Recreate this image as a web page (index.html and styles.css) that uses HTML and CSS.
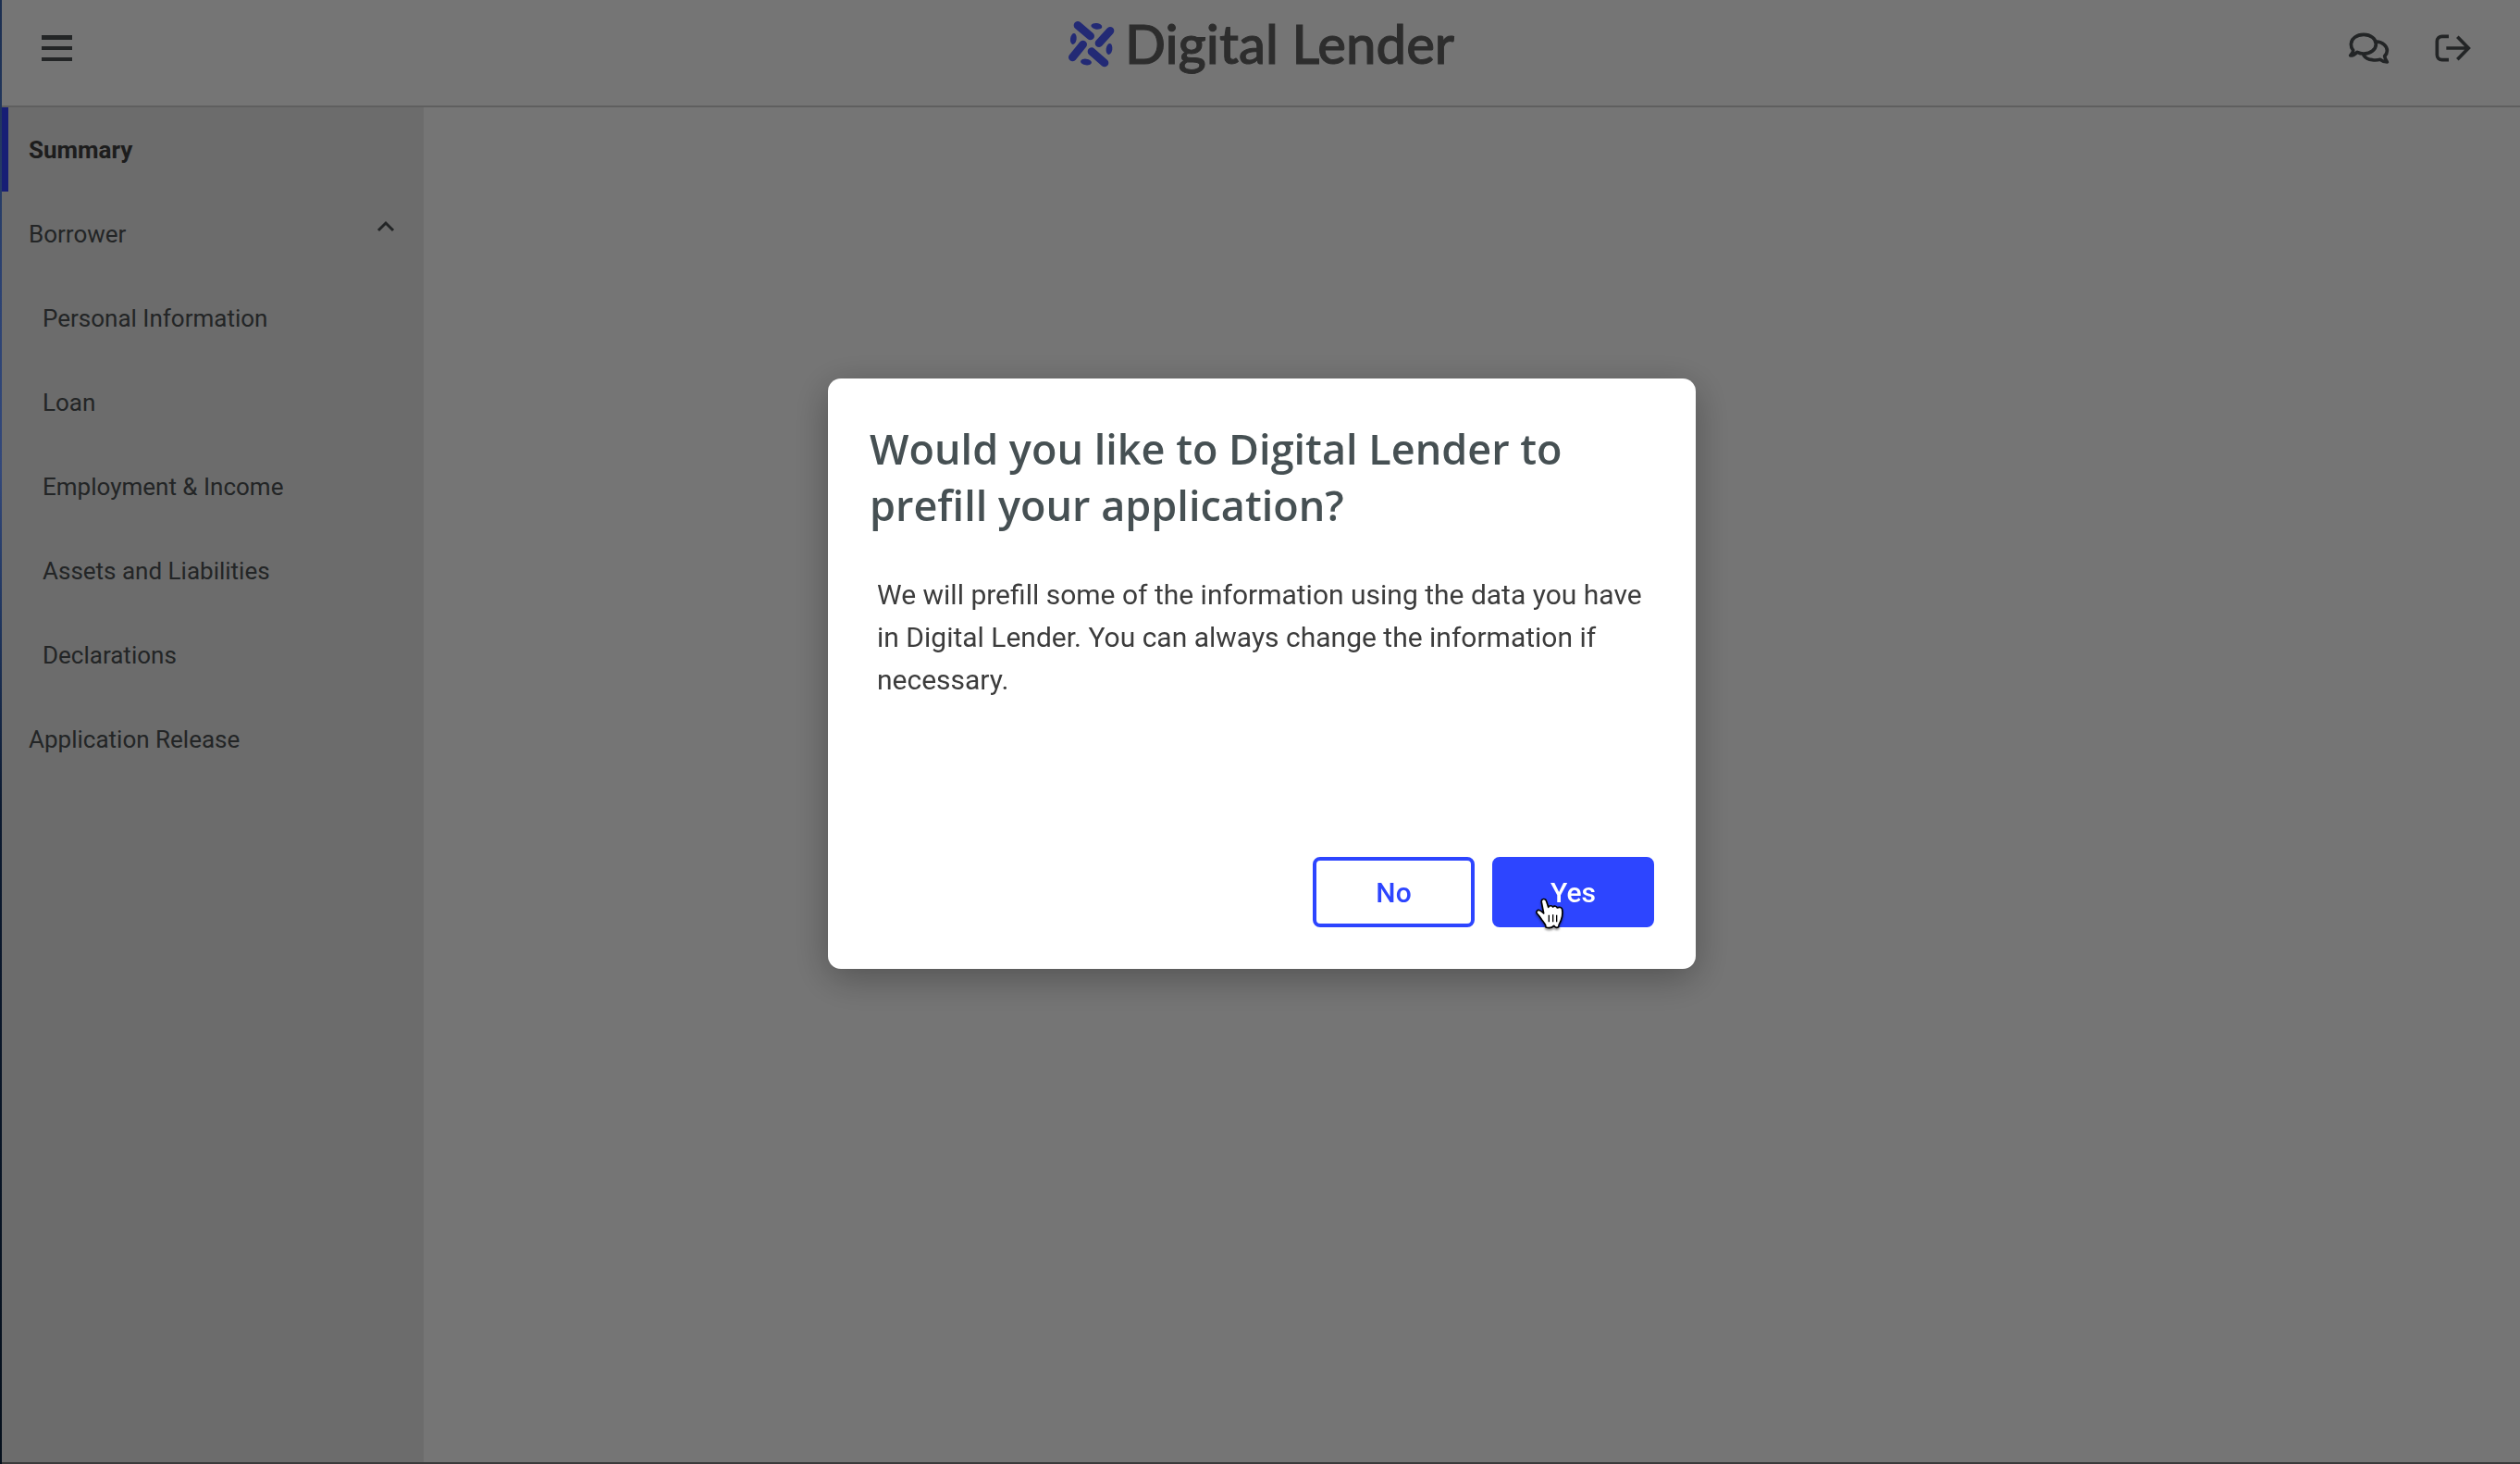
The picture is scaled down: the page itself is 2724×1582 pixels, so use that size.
FILE: index.html
```html
<!DOCTYPE html>
<html lang="en">
<head>
<meta charset="utf-8">
<title>Digital Lender</title>
<meta name="viewport" content="width=device-width, initial-scale=1">
<link rel="stylesheet" href="styles.css">
</head>
<body>
<div class="window">
  <header class="topbar">
    <button class="icon-button" type="button" aria-label="Menu">
      <svg width="33" height="28" viewBox="0 0 33 28" fill="currentColor"><path d="M0 0h33v5H0zM0 12h33v4H0zM0 24h33v4H0z"/></svg>
    </button>
    <a class="brand" href="#">
      <svg class="brand-mark" width="52" height="53" viewBox="72 63 156 159" fill="currentColor" stroke="currentColor" aria-hidden="true">
        <g stroke-width="26" stroke-linecap="round">
          <path d="M105 82l41 35M210 100l-36 40M122 144l-34 42M150 167l42 37"/>
        </g>
        <g stroke="none">
          <ellipse cx="166" cy="85" rx="18" ry="10" transform="rotate(8 166 85)"/>
          <ellipse cx="91" cy="126" rx="10" ry="18" transform="rotate(8 91 126)"/>
          <ellipse cx="207" cy="159" rx="10" ry="18" transform="rotate(8 207 159)"/>
          <ellipse cx="132" cy="201" rx="18" ry="10" transform="rotate(8 132 201)"/>
        </g>
      </svg>
      <span class="brand-name">Digital Lender</span>
    </a>
    <div class="actions">
      <button class="icon-button" type="button" aria-label="Messages">
        <svg width="45" height="36" viewBox="114 72 135 108" fill="none" stroke="currentColor" stroke-width="11" stroke-linejoin="round" stroke-linecap="round">
          <path d="M165 82c23 0 40 14 40 31s-17 31-40 31c-8 0-15-2-21-5-7 7-15 11-22 11 5-5 9-11 9-17-5-6-7-13-7-20 0-17 18-31 41-31z"/>
          <path d="M207 105c19 1 34 14 34 29 0 7-3 13-8 18 1 7 4 13 8 19-8 0-16-3-22-8-8 2-17 3-26 1-12-1-22-6-28-15"/>
        </svg>
      </button>
      <button class="icon-button" type="button" aria-label="Log out">
        <svg width="41" height="32" viewBox="392 79 123 96" fill="none" stroke="currentColor" stroke-width="11">
          <path d="M440 89h-22c-9 0-16 7-16 16v44c0 9 7 16 16 16h22M432 127h72M468 90l36 37-36 37"/>
        </svg>
      </button>
    </div>
  </header>
  <div class="workspace">
    <nav class="sidebar" aria-label="Application">
      <a class="nav-item nav-item-active" href="#">Summary</a>
      <button class="nav-item" type="button" aria-expanded="true">Borrower
        <svg class="chevron" width="20" height="13" viewBox="0 0 20 13" fill="none" stroke="currentColor" stroke-width="3"><path d="M2 11l8-8 8 8"/></svg>
      </button>
      <a class="nav-item nav-item-child" href="#">Personal Information</a>
      <a class="nav-item nav-item-child" href="#">Loan</a>
      <a class="nav-item nav-item-child" href="#">Employment &amp; Income</a>
      <a class="nav-item nav-item-child" href="#">Assets and Liabilities</a>
      <a class="nav-item nav-item-child" href="#">Declarations</a>
      <a class="nav-item" href="#">Application Release</a>
    </nav>
    <main class="content"></main>
  </div>
</div>
<div class="scrim">
  <section class="dialog" role="dialog" aria-modal="true" aria-labelledby="dialog-title">
    <h1 class="dialog-title" id="dialog-title">Would you like to Digital Lender to prefill your application?</h1>
    <p class="dialog-text">We will prefill some of the information using the data you have in Digital Lender. You can always change the information if necessary.</p>
    <div class="dialog-buttons">
      <button class="button" type="button">No</button>
      <button class="button button-primary" type="button">Yes
        <svg class="pointer" width="32" height="35" viewBox="838 238 96 105" aria-hidden="true">
          <path d="M860 253c-2-13 13-14 16-3l6 19c3-6 12-6 15-1 4-4 12-3 14 3 6-4 16-2 16 6 2 12 0 25-4 35-3 8-8 12-8 21-7 4-11 2-15-4-7 8-17 8-26 5 1-10-8-17-13-24-5-8-9-14-16-21-4-5 2-13 9-10 5 2 9 6 13 10z" fill="#fff" stroke="#000" stroke-width="5" stroke-linejoin="round"/>
          <path d="M884 294v23M897 293v24M909 294v23" stroke="#000" stroke-width="4"/>
        </svg>
      </button>
    </div>
  </section>
</div>
</body>
</html>
```
FILE: styles.css
```css
* {
  box-sizing: border-box;
}

body {
  margin: 0;
  background: linear-gradient(#1c2f50, #2c4272 20%, #33487a 32%, #20365f 42%, #0c1a30 55%, #06101c);
  font-family: Roboto, "Liberation Sans", sans-serif;
  font-size: 26px;
  color: #4c5153;
}

button {
  font: inherit;
  color: inherit;
  cursor: pointer;
}

a {
  color: inherit;
  text-decoration: none;
}

svg {
  display: block;
}

.window {
  display: flex;
  flex-direction: column;
  min-height: 100vh;
  margin-left: 2px;
  border-bottom: 2px solid #808080;
  background: #fff;
}

.topbar {
  display: grid;
  grid-template-columns: 1fr auto 1fr;
  align-items: center;
  height: 116px;
  padding: 0 43px 10px;
  border-bottom: 2px solid #d0d0d0;
}

.icon-button {
  justify-self: start;
  padding: 0;
  border: 0;
  background: none;
}

.brand {
  display: flex;
  align-items: center;
  gap: 10px;
  padding-bottom: 10px;
}

.brand-mark {
  color: #4d5dff;
}

.brand-name {
  font-family: Lato, "Liberation Sans", sans-serif;
  font-size: 58px;
  font-weight: 500;
  line-height: 64px;
  color: #626262;
  -webkit-text-stroke: 1px #626262;
}

.actions {
  display: flex;
  justify-content: flex-end;
  align-items: center;
  gap: 48px;
  padding-right: 9px;
}

.workspace {
  display: flex;
  flex: 1;
}

.sidebar {
  display: flex;
  flex-direction: column;
  width: 456px;
  background: #ebebeb;
}

.nav-item {
  display: flex;
  align-items: center;
  justify-content: space-between;
  height: 91px;
  padding: 0 31px 0 22px;
  border: 0;
  border-left: 7px solid transparent;
  background: none;
  text-align: left;
}

.nav-item-active {
  border-left-color: #3442ff;
  font-weight: 700;
  color: #404040;
}

.nav-item-child {
  padding-left: 37px;
}

.chevron {
  margin-bottom: 16px;
}

.content {
  flex: 1;
}

.scrim {
  position: fixed;
  inset: 0 0 0 2px;
  display: flex;
  align-items: flex-start;
  justify-content: center;
  padding: 409px 0 0 2px;
  background: rgba(0, 0, 0, 0.54);
}

.dialog {
  width: 938px;
  padding: 45px;
  border-radius: 14px;
  background: #fff;
  box-shadow: 0 10px 40px rgba(0, 0, 0, 0.3);
}

.dialog-title {
  margin: 0;
  font-family: "Open Sans", "Liberation Sans", sans-serif;
  font-size: 45px;
  font-weight: 600;
  line-height: 61px;
  color: #465053;
}

.dialog-text {
  margin: 44px 0 168px;
  padding-left: 8px;
  font-size: 30px;
  line-height: 46px;
  color: #3c3c3c;
}

.dialog-buttons {
  display: flex;
  justify-content: flex-end;
  gap: 19px;
}

.button {
  position: relative;
  width: 175px;
  height: 76px;
  padding: 0;
  border: 4px solid #2d45ff;
  border-radius: 8px;
  background: #fff;
  font-size: 30px;
  font-weight: 500;
  color: #2d45ff;
}

.button-primary {
  background: #2d45ff;
  color: #fff;
}

.pointer {
  position: absolute;
  top: 40px;
  left: 42px;
  filter: drop-shadow(0 2px 1px rgba(0, 0, 0, 0.4));
}
```
